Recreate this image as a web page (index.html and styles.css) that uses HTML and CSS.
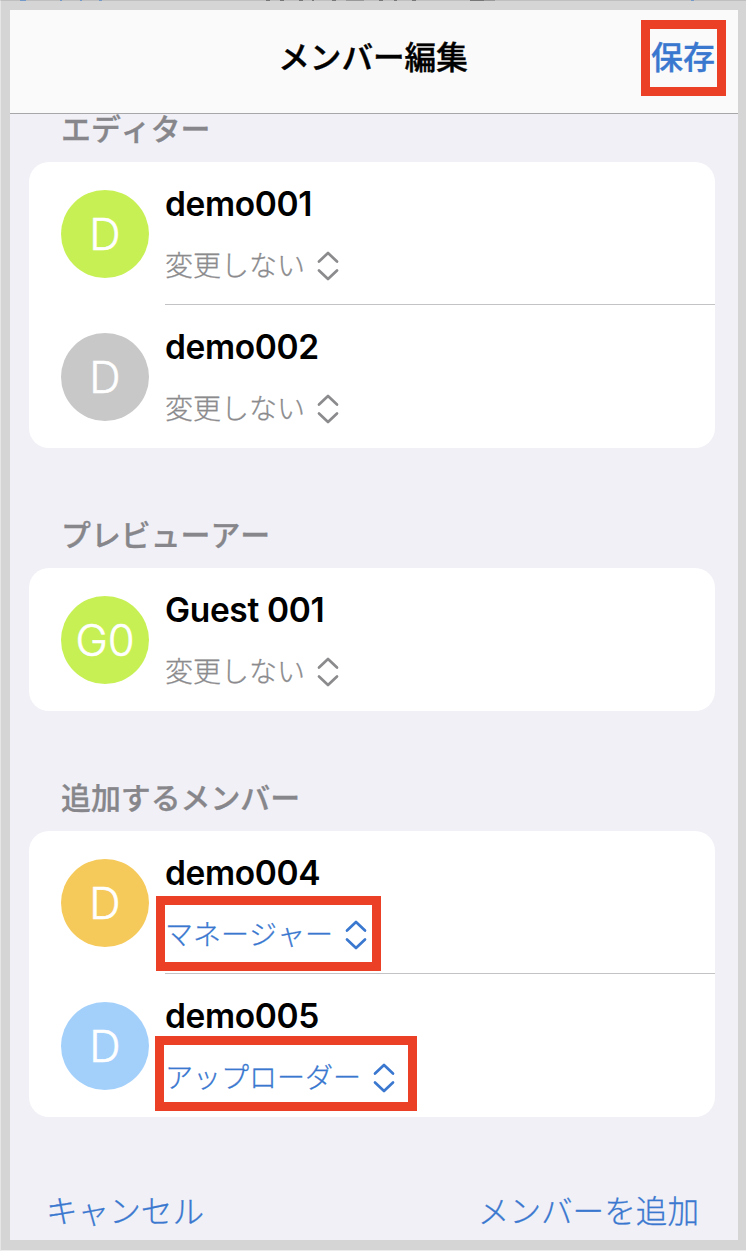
FILE: index.html
```
<!DOCTYPE html>
<html lang="ja">
<head>
  <meta charset="UTF-8" />
  <meta name="viewport" content="width=device-width, initial-scale=1.0"/>
  <title>メンバー編集</title>
  <link rel="stylesheet" href="styles.css">
</head>
<body>
  <svg class="icon-defs" width="0" height="0" aria-hidden="true">
    <symbol id="updown" viewBox="0 0 22 30">
      <path d="M2 10.5 11 2l9 8.5M2 19.5l9 8.5 9-8.5" fill="none" stroke="currentColor" stroke-width="2.7" stroke-linecap="round" stroke-linejoin="round"/>
    </symbol>
  </svg>

  <div class="screen">
    <header class="header">
      <h1 class="title">メンバー編集</h1>
      <button type="button" class="save marked">保存</button>
    </header>

    <main class="content">
      <section class="group">
        <h2 class="group-title">エディター</h2>
        <ul class="card">
          <li class="member">
            <span class="avatar green">D</span>
            <div class="info">
              <span class="name">demo001</span>
              <button type="button" class="role">変更しない<svg class="icon"><use href="#updown"/></svg></button>
            </div>
          </li>
          <li class="member">
            <span class="avatar gray">D</span>
            <div class="info">
              <span class="name">demo002</span>
              <button type="button" class="role">変更しない<svg class="icon"><use href="#updown"/></svg></button>
            </div>
          </li>
        </ul>
      </section>

      <section class="group">
        <h2 class="group-title">プレビューアー</h2>
        <ul class="card">
          <li class="member">
            <span class="avatar green">G0</span>
            <div class="info">
              <span class="name">Guest 001</span>
              <button type="button" class="role">変更しない<svg class="icon"><use href="#updown"/></svg></button>
            </div>
          </li>
        </ul>
      </section>

      <section class="group">
        <h2 class="group-title">追加するメンバー</h2>
        <ul class="card">
          <li class="member">
            <span class="avatar orange">D</span>
            <div class="info">
              <span class="name">demo004</span>
              <button type="button" class="role active marked manager">マネージャー<svg class="icon"><use href="#updown"/></svg></button>
            </div>
          </li>
          <li class="member">
            <span class="avatar blue">D</span>
            <div class="info">
              <span class="name">demo005</span>
              <button type="button" class="role active marked uploader">アップローダー<svg class="icon"><use href="#updown"/></svg></button>
            </div>
          </li>
        </ul>
      </section>
    </main>

    <footer class="footer">
      <button type="button" class="link">キャンセル</button>
      <button type="button" class="link">メンバーを追加</button>
    </footer>
  </div>
</body>
</html>
```
FILE: styles.css
```
* {
  box-sizing: border-box;
}
body {
  margin: 0;
  background: #d5d5d5;
  color: #000;
  font-family: Inter, "Noto Sans CJK JP", sans-serif;
  font-kerning: none;
}
button {
  margin: 0;
  padding: 0;
  border: none;
  background: none;
  color: #3a78d0;
  font-family: inherit;
  font-kerning: inherit;
  cursor: pointer;
}
.icon-defs {
  display: block;
}
.screen {
  display: flex;
  flex-direction: column;
  width: 746px;
  height: 1251px;
  padding: 9px 8px 10px 9px;
  border-top: 1px solid #bfbfbf;
  border-left: 1px solid #e6e6e6;
  border-bottom: 1px solid #ececec;
}
/* edge of the page behind the sheet */
.screen::before {
  content: "";
  position: absolute;
  top: 0;
  left: 0;
  width: 746px;
  height: 1px;
  background: linear-gradient(90deg, transparent 20px, #7399c8 20px 26px, transparent 26px 60px, #7399c8 60px 62px, transparent 62px 80px, #7399c8 80px 82px, transparent 82px 99px, #7399c8 99px 102px, transparent 102px 266px, #777 266px 270px, transparent 270px 280px, #777 280px 284px, transparent 284px 299px, #777 299px 303px, transparent 303px 312px, #777 312px 314px, transparent 314px 332px, #777 332px 336px, transparent 336px 346px, #999 346px 364px, transparent 364px 379px, #777 379px 383px, transparent 383px 394px, #777 394px 397px, transparent 397px 412px, #777 412px 416px, transparent 416px 470px, #777 470px 484px, #999 484px 495px, transparent 495px 691px, #7399c8 691px 694px, transparent 694px);
}
.header {
  display: grid;
  grid-template-columns: 1fr auto 1fr;
  align-items: center;
  flex: none;
  height: 104px;
  padding: 0 23px 8px 21px;
  border-bottom: 1px solid #a7a7aa;
  background: #fafafa;
}
.title {
  grid-column: 2;
  margin: 0;
  font-size: 31.6px;
  font-weight: 500;
  line-height: 48px;
  -webkit-text-stroke: 0.4px;
}
.save {
  justify-self: end;
  font-size: 32px;
  font-weight: 500;
  line-height: 48px;
  -webkit-text-stroke: 0.3px;
}
/* red frame around the control */
.marked {
  position: relative;
}
.marked::after {
  content: "";
  position: absolute;
  border: 9px solid #eb4025;
}
.save::after {
  inset: -14px -11px -14px -10px;
}
.manager::after {
  inset: -19px -14px -16px -9px;
}
.uploader::after {
  inset: -22px -22px -13px -10px;
}
.content {
  flex: 1;
  padding: 0 23px 0 19px;
  background: #f1f0f6;
}
.group {
  margin-bottom: 62px;
}
.group:last-child {
  margin-bottom: 0;
}
.group-title {
  margin: 0;
  padding: 7px 0 15px 32px;
  color: #86868b;
  font-size: 29.9px;
  font-weight: 500;
  line-height: 36px;
  -webkit-text-stroke: 0.3px;
}
.group:first-child .group-title {
  padding-top: 0;
  padding-bottom: 17px;
  line-height: 31px;
}
.card {
  margin: 0;
  padding: 0;
  border-radius: 20px;
  background: #fff;
  list-style: none;
}
.member {
  display: flex;
  gap: 16px;
  height: 143px;
  padding-left: 32px;
}
.avatar {
  flex: none;
  width: 88px;
  height: 88px;
  margin-top: 28px;
  border-radius: 50%;
  color: #fff;
  font-size: 43.5px;
  font-weight: 300;
  line-height: 89px;
  text-align: center;
  -webkit-text-stroke: 0.5px;
}
.green {
  background: #c7f055;
}
.gray {
  background: #c8c8c8;
}
.orange {
  background: #f5ca5b;
}
.blue {
  background: #a3d0fb;
}
.info {
  display: flex;
  flex: 1;
  flex-direction: column;
  align-items: flex-start;
  padding-top: 20px;
}
.member:not(:last-child) .info {
  border-bottom: 1px solid #c3c3c5;
}
.name {
  margin-bottom: 20px;
  font-size: 33.5px;
  font-weight: 600;
  letter-spacing: -0.35px;
  line-height: 45px;
  margin-bottom: 19px;
}
.role {
  display: flex;
  align-items: center;
  gap: 12px;
  color: #8b8b8d;
  font-size: 28px;
  font-weight: 300;
  line-height: 40px;
  -webkit-text-stroke: 0.3px;
}
.role.active {
  color: #3a78d0;
}
.icon {
  width: 22px;
  height: 30px;
}
.footer {
  display: flex;
  justify-content: space-between;
  align-items: center;
  flex: none;
  height: 60px;
  padding: 4px 39px 0 36px;
  background: #f1f0f6;
}
.link {
  font-size: 31.6px;
  font-weight: 300;
  line-height: 48px;
  -webkit-text-stroke: 0.3px;
}
```
